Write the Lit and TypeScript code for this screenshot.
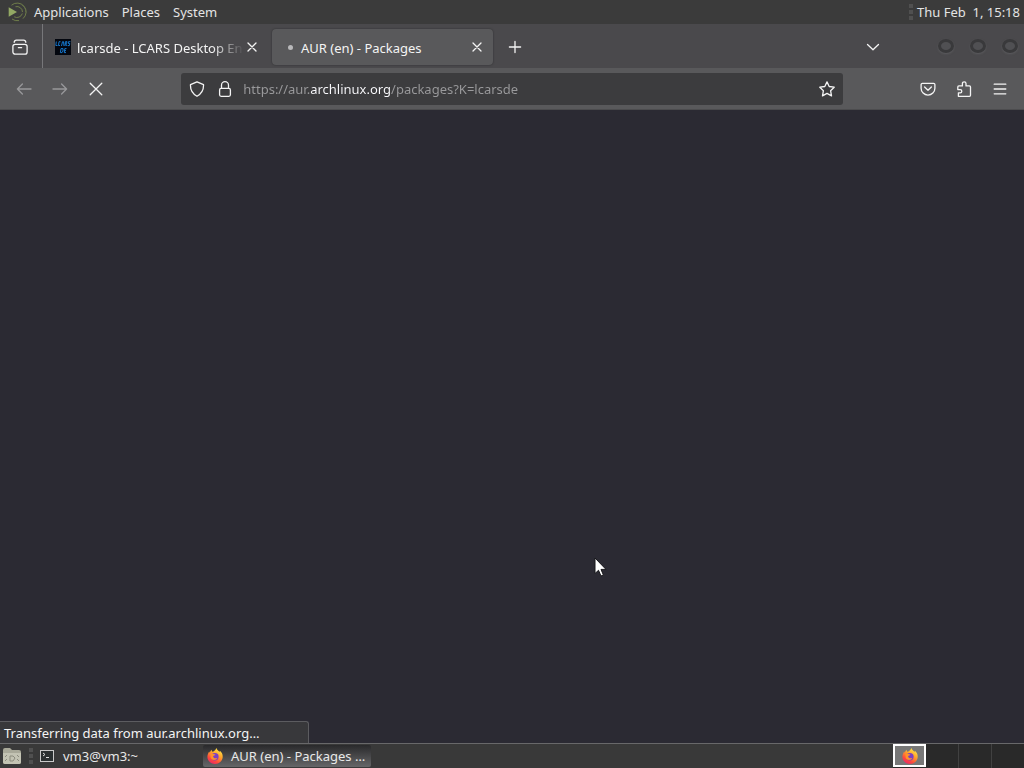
import { LitElement, html, css, svg } from "lit";
import { customElement } from "lit/decorators.js";

const stroke = (paths: unknown, size = 16) => html`<svg
  width=${size} height=${size} viewBox="0 0 16 16" fill="none" stroke="currentColor"
  stroke-width="1.3" stroke-linecap="round" stroke-linejoin="round" aria-hidden="true">${paths}</svg>`;

const icons = {
  view: stroke(svg`<rect x="0.9" y="5.4" width="14.2" height="9.7" rx="2.2"/><path d="M2.2 3.3Q2.4 1.2 4.4 1.2H11.6Q13.6 1.2 13.8 3.3M6.4 8.7H9.6"/>`),
  close: stroke(svg`<path d="M4 4 12 12M12 4 4 12"/>`),
  plus: stroke(svg`<path d="M8 2.4V13.6M2.4 8H13.6"/>`),
  down: stroke(svg`<path d="M2.5 5.5 8 10.8 13.5 5.5"/>`),
  back: stroke(svg`<path d="M15 8H1.4M6.4 3 1.4 8 6.4 13"/>`),
  forward: stroke(svg`<path d="M1 8H14.6M9.6 3 14.6 8 9.6 13"/>`),
  stop: stroke(svg`<path d="M2.2 2.2 13.8 13.8M13.8 2.2 2.2 13.8"/>`),
  shield: stroke(svg`<path d="M8 .8 14.5 3.6C14.8 8.6 12.6 12.8 8 15.3 3.4 12.8 1.2 8.6 1.5 3.6Z"/>`),
  lock: stroke(svg`<rect x="2.6" y="7.4" width="10.8" height="7.9" rx="1.5"/><path d="M4.5 7.2V4.2a3.5 3.5 0 0 1 7 0V7.2"/>`),
  star: stroke(svg`<path d="M8 .9 10.2 5.5 15.2 6.2 11.6 9.7 12.5 14.9 8 12.4 3.5 14.9 4.4 9.7.8 6.2 5.8 5.5Z"/>`),
  pocket: stroke(svg`<path d="M2.4 2.3H13.6A1.3 1.3 0 0 1 14.9 3.6V7.2a6.9 6.9 0 0 1-13.8 0V3.6A1.3 1.3 0 0 1 2.4 2.3ZM4.6 6 8 9.3 11.4 6"/>`),
  puzzle: stroke(svg`<path d="M2.4 15.3V11.8H4.2a1.6 1.6 0 0 0 0-3.2H1.8V6Q1.8 4.9 2.9 4.9H6.4V2.6a1.8 1.8 0 0 1 3.6 0V4.9H13.4Q14.5 4.9 14.5 6V14.2Q14.5 15.3 13.4 15.3Z"/>`),
  menu: stroke(svg`<path d="M2.2 3.2H13.8M2.2 8H13.8M2.2 12.8H13.8"/>`),
};

const firefox = html`<svg width="16" height="16" viewBox="0 0 16 16" aria-hidden="true">
  <defs>
    <linearGradient id="flame" x1="0.8" y1="0" x2="0.25" y2="1">
      <stop offset="0" stop-color="#fff14f"/><stop offset="0.4" stop-color="#ffa52b"/>
      <stop offset="0.75" stop-color="#ff4a3c"/><stop offset="1" stop-color="#e8236d"/>
    </linearGradient>
  </defs>
  <path fill="url(#flame)" d="M9.4 0C9.9 2 11.6 2.7 12.4 4L12.9 2.7C14.6 4 15.9 6.2 15.7 9 15.4 13 12.2 16 8 16 3.6 16 .4 12.7.4 8.8.4 6.6 1.3 4.8 2.3 3.4L2.6 4.7 4.3 1.7 5.4 3.8C6.6 3.4 8.2 3 9.4 0Z"/>
  <circle cx="7.9" cy="8.8" r="3.7" fill="#7b3fc4"/>
  <path fill="#ff9229" d="M3.4 6C5 5.3 6.5 6 8.4 6.6 7.9 7.7 6.5 7.6 6.1 8.3 6.4 10.4 8.6 10.8 10.4 9.8 9.6 12.4 5 13.1 3.7 9.8Z"/>
</svg>`;

@customElement("app-root")
export class AppRoot extends LitElement {
  static styles = css`
    :host {
      display: flex;
      flex-direction: column;
      height: 100vh;
      overflow: hidden;
      position: relative;
      background: #2b2a33;
      color: #f4f4f4;
      font: 13px/20px "Noto Sans", sans-serif;
    }
    * { box-sizing: border-box; }
    svg { display: block; flex: none; }
    button {
      font: inherit;
      color: inherit;
      background: none;
      border: 0;
      padding: 0;
      margin: 0;
      display: flex;
      align-items: center;
    }
    .panel {
      display: flex;
      align-items: center;
      height: 24px;
      flex: none;
      background: #3b3b3b;
      color: #e4e4e4;
      padding: 0 4px 0 8px;
    }
    .menus { display: flex; gap: 13px; padding-left: 6px; flex: 1; }
    .grip {
      width: 4px;
      height: 16px;
      flex: none;
      background: repeating-linear-gradient(#505050 0 4px, transparent 4px 6px);
    }
    .clock { padding-left: 4px; white-space: pre; }
    .tabs {
      display: flex;
      align-items: center;
      height: 44px;
      flex: none;
      background: #4a494c;
    }
    .view {
      width: 43px;
      height: 44px;
      padding: 2px 0 0 12px;
      border-right: 1px solid #77777a;
    }
    .strip { display: flex; gap: 4px; padding-left: 4px; flex: 1; min-width: 0; }
    .tab {
      display: flex;
      align-items: center;
      width: 221px;
      height: 36px;
      padding: 0 8px;
      border-radius: 4px;
    }
    .active { background: #59595b; box-shadow: 0 0 2px #2c2c2e; }
    .strip, .list { margin-top: 2px; }
    .label {
      flex: 1;
      min-width: 0;
      white-space: nowrap;
      padding-top: 2px;
      margin-left: 6px;
    }
    .fade { mask-image: linear-gradient(90deg, #000 calc(100% - 32px), transparent); }
    .dot { width: 5px; height: 5px; margin: 0 2px 0 8px; border-radius: 50%; background: #b9b9bb; }
    .close { width: 16px; height: 16px; }
    .new { width: 34px; height: 36px; padding-left: 2px; justify-content: center; }
    .list { width: 36px; height: 36px; justify-content: center; margin-right: 47px; }
    .window { display: flex; gap: 16px; padding-right: 6px; }
    .round {
      width: 16px;
      height: 14px;
      border-radius: 50%;
      border: 3px solid #39393b;
      background: #505053;
      box-shadow: 0 1px 2px #5c5c5f;
    }
    .toolbar {
      display: flex;
      align-items: center;
      height: 42px;
      flex: none;
      padding: 0 6px;
      background: #59595b;
      border-bottom: 1px solid #4c4c4e;
    }
    .tool { width: 36px; height: 32px; justify-content: center; flex: none; }
    .dim { color: #98989a; }
    .spring { flex: 5; }
    .url {
      flex: 48;
      display: flex;
      align-items: center;
      gap: 12px;
      height: 32px;
      padding: 0 8px;
      border-radius: 3px;
      background: #3c3c3e;
    }
    .address {
      flex: 1;
      min-width: 0;
      height: 24px;
      border: 0;
      outline: 0;
      padding: 0;
      margin-left: -2px;
      font: inherit;
      color: transparent;
      background: linear-gradient(90deg, #9a9a9c 67px, #fbfbfe 67px 147px, #9a9a9c 147px);
      -webkit-background-clip: text;
      background-clip: text;
    }
    .page { flex: 1; position: relative; background: #2b2a33; }
    .status {
      position: absolute;
      left: 0;
      bottom: 0;
      width: 309px;
      height: 22px;
      padding: 1px 4px 0;
      line-height: 20px;
      background: #38383b;
      border: 1px solid #5c5c60;
      border-width: 1px 1px 0 0;
      border-radius: 0 3px 0 0;
    }
    .cursor { position: absolute; left: 594px; top: 447px; }
    .taskbar {
      display: flex;
      align-items: center;
      height: 25px;
      flex: none;
      background: #393939;
      border-top: 1px solid #68686a;
      color: #e8e8e8;
      padding-left: 2px;
      text-shadow: 1px 1px 1px #111;
    }
    .files { width: 27px; height: 24px; }
    .task { height: 22px; width: 168px; padding: 0 4px; gap: 8px; white-space: nowrap; }
    .tasks { display: flex; flex: 1; padding-left: 2px; }
    .current {
      background: linear-gradient(#29292b, #666668);
      border-radius: 2px;
    }
    .spaces { display: flex; height: 24px; background: #292929; }
    .space { width: 33px; height: 24px; border-right: 1px solid #414141; justify-content: center; }
    .space:last-child { width: 32px; border-right: 0; }
    .here { height: 23px; border: 2px solid #fff; background: #777; }
  `;

  render() {
    return html`
      <nav class="panel">
        <svg width="20" height="20" viewBox="0 0 20 20" fill="none" stroke="#7c8e4e" stroke-width="0.8" aria-hidden="true">
          <path d="M.7 5.2V14.8L9 10Z" fill="#93a964" stroke="none"/>
          <path d="M3.5 3.2A8.8 8.8 0 0 1 15 16.6M4 17A9 9 0 0 0 11 18.6"/>
          <path d="M7.5 4.7A5.6 5.6 0 0 1 14.5 10M14.3 11.5A5.6 5.6 0 0 1 6.2 14.8"/>
          <path d="M13.5 2.7A9 9 0 0 1 18 10.5" stroke="#66744a"/>
        </svg>
        <div class="menus">
          <button>Applications</button><button>Places</button><button>System</button>
        </div>
        <span class="grip"></span>
        <time class="clock">Thu Feb  1, 15:18</time>
      </nav>
      <div class="tabs">
        <button class="view" aria-label="Firefox View">${icons.view}</button>
        <div class="strip">
          <div class="tab">
            <svg width="16" height="16" viewBox="0 0 16 16" aria-hidden="true">
              <rect width="16" height="16" fill="#03060e"/>
              <g stroke="#1675c9" fill="none" stroke-width="1">
                <path d="M1.3 2.5.8 6.5H2.5M5.5 2.7H4L3.5 6.5H5M6.5 7 7.5 2.7H8.5L9 7M10 7 10.4 2.7H12L11.5 4.6H10.5L12 7M15.4 2.7H13.5L13.3 4.5H14.8L14.4 6.6H12.8M6 9.6 5.4 13.6H7L8 12V9.6ZM11.5 9.6H9.8L9.3 13.6H11M9.6 11.6H11"/>
              </g>
            </svg>
            <span class="label fade">lcarsde - LCARS Desktop En</span>
            <button class="close" aria-label="Close tab">${icons.close}</button>
          </div>
          <div class="tab active">
            <span class="dot"></span>
            <span class="label">AUR (en) - Packages</span>
            <button class="close" aria-label="Close tab">${icons.close}</button>
          </div>
          <button class="new" aria-label="New tab">${icons.plus}</button>
        </div>
        <button class="list" aria-label="List all tabs">${icons.down}</button>
        <div class="window">
          <button class="round" aria-label="Minimize"></button>
          <button class="round" aria-label="Maximize"></button>
          <button class="round" aria-label="Close"></button>
        </div>
      </div>
      <div class="toolbar">
        <button class="tool dim" aria-label="Back">${icons.back}</button>
        <button class="tool dim" aria-label="Forward">${icons.forward}</button>
        <button class="tool" aria-label="Stop">${icons.stop}</button>
        <span class="spring"></span>
        <div class="url">
          <button aria-label="Tracking protection">${icons.shield}</button>
          <button aria-label="Site information">${icons.lock}</button>
          <input class="address" type="text" aria-label="Address" value="https://aur.archlinux.org/packages?K=lcarsde" />
          <button aria-label="Bookmark this page">${icons.star}</button>
        </div>
        <span class="spring"></span>
        <button class="tool" aria-label="Pocket">${icons.pocket}</button>
        <button class="tool" aria-label="Extensions">${icons.puzzle}</button>
        <button class="tool" aria-label="Menu">${icons.menu}</button>
      </div>
      <main class="page">
        <svg class="cursor" width="14" height="22" viewBox="0 0 14 22" aria-hidden="true">
          <path d="M1 1V16.5L4.5 13.3 7 19 9.4 18 7 12.4H12Z" fill="#fff" stroke="#18181c"/>
        </svg>
        <div class="status" role="status">Transferring data from aur.archlinux.org…</div>
      </main>
      <footer class="taskbar">
        <button class="files" aria-label="Files">
          <svg width="20" height="20" viewBox="0 0 20 20">
            <path d="M1 4Q1 2 3 2H8L10 4H17Q19 4 19 6V16Q19 18 17 18H3Q1 18 1 16Z" fill="#a9a999"/>
            <path d="M1 7H19V16Q19 18 17 18H3Q1 18 1 16Z" fill="#c3c3b3"/>
            <path d="M8 10H11L13 12 11 15H8ZM3 11 5 9M15 9 17 11M3 15 5 13M15 13 17 15" fill="none" stroke="#8b8b7d"/>
          </svg>
        </button>
        <span class="grip"></span>
        <div class="tasks">
          <button class="task">
            <svg width="16" height="16" viewBox="0 0 16 16" fill="none">
              <rect x="1.5" y="2.5" width="13" height="11" fill="#2b3031" stroke="#c9c9c9"/>
              <path d="M4 5 6 6.5 4 8M7 9.5H10" stroke="#dedede"/>
            </svg>
            vm3@vm3:~
          </button>
          <button class="task current">${firefox}AUR (en) - Packages …</button>
        </div>
        <div class="spaces">
          <button class="space here" aria-label="Workspace 1">${firefox}</button>
          <button class="space" aria-label="Workspace 2"></button>
          <button class="space" aria-label="Workspace 3"></button>
          <button class="space" aria-label="Workspace 4"></button>
        </div>
      </footer>
    `;
  }
}
